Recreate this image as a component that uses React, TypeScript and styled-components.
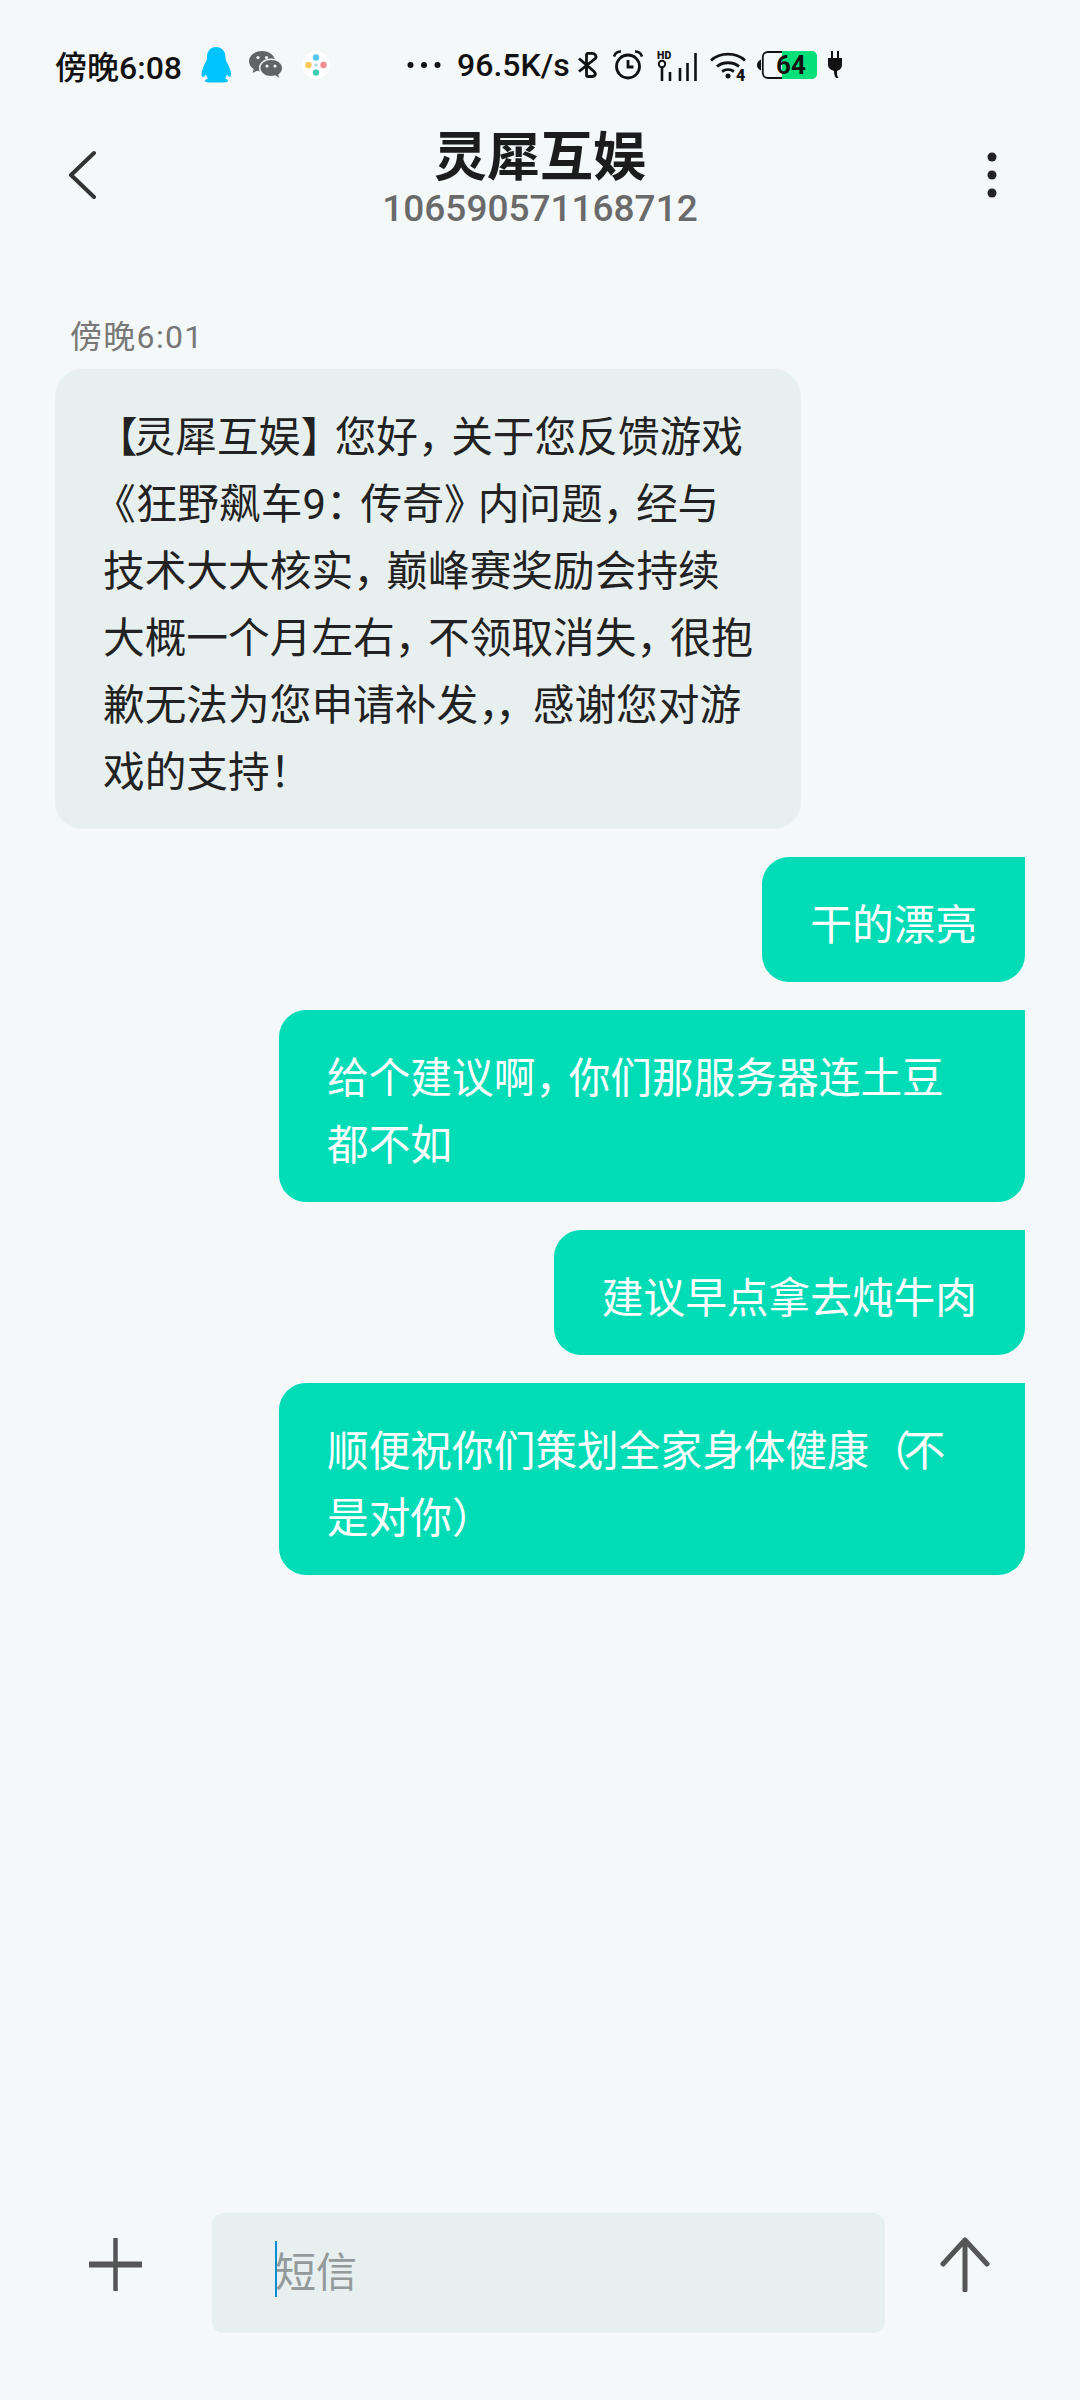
import React from "react";
import styled, { createGlobalStyle } from "styled-components";

const FONT = `"Roboto", "Noto Sans CJK SC", sans-serif`;
const PAGE_BG = "#f4f8f9";

const GlobalStyle = createGlobalStyle`
  html, body {
    margin: 0;
    padding: 0;
    background: ${PAGE_BG};
  }
`;

const Page = styled.div`
  width: 1080px;
  height: 2400px;
  display: flex;
  flex-direction: column;
  background: ${PAGE_BG};
  font-family: ${FONT};
  overflow: hidden;
`;

const StatusBar = styled.div`
  height: 126px;
  padding-top: 2px;
  flex: none;
  display: flex;
  align-items: center;
  padding-left: 55px;
  color: #111;
`;

const StatusTime = styled.span`
  font-size: 32px;
  font-weight: 500;
  width: 145px;
  flex: none;
`;

const StatusSpeed = styled.span`
  flex: none;
  font-size: 32px;
  line-height: 40px;
  font-weight: 500;
  margin: 0 8px 0 16px;
  white-space: nowrap;
`;

const StatusIcon = styled.svg<{ $gap?: number }>`
  flex: none;
  display: block;
  margin-right: ${(p) => p.$gap ?? 0}px;
`;

const Header = styled.div`
  height: 96px;
  flex: none;
  display: grid;
  grid-template-columns: 1fr auto 1fr;
  align-items: center;
  padding: 0 66px;
`;

const BackIcon = styled.svg`
  justify-self: start;
  margin-top: -8px;
`;

const MoreIcon = styled.svg`
  justify-self: end;
  margin: -8px 17px 0 0;
`;

const Contact = styled.div`
  display: flex;
  flex-direction: column;
  align-items: center;
`;

const ContactName = styled.div`
  font-size: 53px;
  line-height: 60px;
  font-weight: 700;
  color: #1c1c1c;
`;

const ContactNumber = styled.div`
  font-size: 37px;
  line-height: 42px;
  font-weight: 500;
  color: #6a6a6a;
`;

const MessageList = styled.div`
  display: flex;
  flex-direction: column;
  align-items: flex-start;
  padding: 93px 55px 0;
`;

const TimeLabel = styled.div`
  font-size: 32px;
  line-height: 40px;
  letter-spacing: 1.300px;
  margin: 0 0 12px 15px;
  color: #777;
`;

const Bubble = styled.div<{ $mine?: boolean; $wide?: boolean }>`
  box-sizing: border-box;
  width: ${(p) => (p.$wide ? "746px" : "fit-content")};
  padding: 35px 48px 23px;
  font-size: 41.700px;
  line-height: 67px;
  background: ${(p) => (p.$mine ? "#00dcb6" : "#e8f0ef")};
  color: ${(p) => (p.$mine ? "#fff" : "#222")};
  border-radius: ${(p) => (p.$mine ? "27px 0 27px 27px" : "27px")};
  align-self: ${(p) => (p.$mine ? "flex-end" : "flex-start")};
  margin-top: ${(p) => (p.$mine ? "28px" : "0")};
`;

const BubbleLine = styled.div`
  white-space: nowrap;
`;

const Punct = styled.span<{ $by: number; $hang: number }>`
  letter-spacing: ${(p) => p.$by}px;
  margin-left: ${(p) => p.$hang}px;
`;

const Composer = styled.div`
  margin-top: auto;
  margin-bottom: 67px;
  display: flex;
  align-items: center;
  padding-left: 89px;
`;

const ComposerIcon = styled.svg`
  flex: none;
  margin-top: -18px;
`;

const InputBox = styled.div`
  box-sizing: border-box;
  width: 673px;
  height: 120px;
  margin: 0 55px 0 70px;
  padding-left: 63px;
  display: flex;
  align-items: center;
  background: #e8f0ef;
  border-radius: 12px;
`;

const Caret = styled.div`
  width: 2px;
  height: 56px;
  flex: none;
  margin-top: -8px;
  background: #0a8fd6;
`;

const Placeholder = styled.span`
  font-size: 41px;
  margin: -8px 0 0 -2px;
  color: #939a9a;
`;

const PUNCT_SPACING: Record<string, number> = {
  "，": -8.5,
  "，，": -4,
  "：": -7,
  "《": 0,
  "》": -8,
  "【": -4,
  "】": -7.5,
  "（": -7,
};

// opening brackets hang into the bubble padding
const PUNCT_HANG: Record<string, number> = {
  "【": -7,
  "《": -9,
};

const renderLine = (text: string) =>
  text.split(/(，，|[，：《》【】（])/).map((part, i) =>
    part in PUNCT_SPACING ? (
      <Punct key={i} $by={PUNCT_SPACING[part]} $hang={PUNCT_HANG[part] ?? 0}>
        {part}
      </Punct>
    ) : (
      part
    )
  );

const Message: React.FC<{ lines: string[]; mine?: boolean; wide?: boolean }> = ({ lines, mine, wide }) => (
  <Bubble $mine={mine} $wide={wide}>
    {lines.map((line) => (
      <BubbleLine key={line}>{renderLine(line)}</BubbleLine>
    ))}
  </Bubble>
);

const QQIcon = () => (
  <StatusIcon width="32" height="36" viewBox="0 0 32 36" $gap={17}>
    <path
      fill="#00c4ff"
      d="M16 0c6 0 9.500 4.500 9.500 10 0 2 .3 3 1 4.500 2 3.500 4.500 8.500 4.500 13 0 1.500-.6 2.500-1.300 2.500-.8 0-1.700-1-2.700-2.500-.3 1.500-1 3-2 4 1.500.6 3 1.300 3 2.300 0 1-1.500 1.700-4 1.700h-15c-2.500 0-4-.7-4-1.700 0-1 1.500-1.700 3-2.300-1-1-1.700-2.500-2-4-1 1.500-1.900 2.500-2.700 2.500C2.100 30 1.500 29 1.500 27.500c0-4.500 2.500-9.500 4.500-13 .7-1.500 1-2.500 1-4.500C7 4.500 10 0 16 0z"
    />
  </StatusIcon>
);

const WeChatIcon = () => (
  <StatusIcon width="34" height="28" viewBox="0 0 34 28" $gap={19}>
    <path fill="#606465" d="M13 0C5.800 0 0 4.500 0 10.200c0 3.200 1.800 6 4.700 7.900L3.600 22l4.500-2.300c1.500.4 3.200.7 4.900.7 7.200 0 13-4.500 13-10.200S20.200 0 13 0z" />
    <path fill={PAGE_BG} d="M22 7.500c-6.500 0-12 4.200-12 9.400 0 5.200 5.500 9.400 12 9.400 1.500 0 3-.2 4.300-.6L31 28l-1-3.700c2.600-1.700 4-4.400 4-7.400 0-5.200-5.500-9.400-12-9.400z" />
    <path fill="#606465" d="M22 9c-5.500 0-10.500 3.500-10.500 8s5 8 10.500 8c1.500 0 2.900-.2 4.200-.7l4 2.500-1-3.300c2.300-1.500 3.800-3.800 3.800-6.500 0-4.500-5-8-10.500-8z" />
    <circle cx="9" cy="6.500" r="1.600" fill={PAGE_BG} />
    <circle cx="17.500" cy="6.500" r="1.600" fill={PAGE_BG} />
    <circle cx="18" cy="15" r="1.500" fill={PAGE_BG} />
    <circle cx="26" cy="15" r="1.500" fill={PAGE_BG} />
  </StatusIcon>
);

const FlowerIcon = () => (
  <StatusIcon width="28" height="28" viewBox="0 0 28 28" $gap={77}>
    <circle cx="14" cy="14" r="14" fill="#fff" />
    <circle cx="14" cy="6.500" r="3.200" fill="#55c7ef" />
    <circle cx="21.500" cy="14" r="3.200" fill="#f28b94" />
    <circle cx="14" cy="21.500" r="3.200" fill="#3fd0b2" />
    <circle cx="6.500" cy="14" r="3.200" fill="#f8c95b" />
    <circle cx="14" cy="14" r="1.800" fill="#b5dbe6" />
  </StatusIcon>
);

const DotsIcon = () => (
  <StatusIcon width="34" height="8" viewBox="0 0 34 8">
    <circle cx="3.500" cy="4" r="3" fill="#111" />
    <circle cx="17" cy="4" r="3" fill="#111" />
    <circle cx="30.500" cy="4" r="3" fill="#111" />
  </StatusIcon>
);

const BluetoothIcon = () => (
  <StatusIcon width="21" height="26" viewBox="0 0 21 26" $gap={14}>
    <path
      fill="none"
      stroke="#111"
      strokeWidth="2.800"
      d="M1 6.500 16 19.500c3 3 .5 5-2 5H10c-1 0-1.500-.8-1.500-1.500V3c0-1 .5-1.600 1.500-1.600h4c3 0 5 2.500 3.500 5L1 19.500"
    />
  </StatusIcon>
);

const AlarmIcon = () => (
  <StatusIcon width="30" height="30" viewBox="0 0 30 30" $gap={14}>
    <circle cx="15" cy="16.500" r="11.500" fill="none" stroke="#111" strokeWidth="2.800" />
    <path d="M15 10v7h5.500" fill="none" stroke="#111" strokeWidth="2.800" />
    <path d="M1 6.500C2 3.500 4.500 1.500 8 1.500M29 6.500C28 3.500 25.500 1.500 22 1.500" fill="none" stroke="#111" strokeWidth="2.600" />
  </StatusIcon>
);

const SignalIcon = () => (
  <StatusIcon width="40" height="31" viewBox="0 0 40 31" $gap={13}>
    <text x="0" y="9" fontFamily="Roboto" fontWeight="900" fontSize="10.500" fill="#111">HD</text>
    <circle cx="5" cy="14" r="3.200" fill="none" stroke="#111" strokeWidth="2" />
    <path d="M5 17.500V31M13 22v9M23 18v13M30.500 13v18M38.500 3v28" stroke="#111" strokeWidth="2.600" />
  </StatusIcon>
);

const WifiIcon = () => (
  <StatusIcon width="37" height="31" viewBox="0 0 37 31" $gap={10}>
    <path d="M1 10.500C10 2 26 2 35 10.500M7 16.500C13 11.500 23 11.500 29 16.500M12 21.500c3.500-2.500 8.500-2.500 12 0" fill="none" stroke="#111" strokeWidth="2.800" />
    <circle cx="18" cy="26" r="2.500" fill="#111" />
    <text x="26" y="31" fontFamily="Roboto" fontWeight="900" fontSize="16" fill="#111">4</text>
  </StatusIcon>
);

const BatteryIcon = () => (
  <StatusIcon width="60" height="28" viewBox="0 0 60 28" $gap={11}>
    <path d="M4 8.500C1.500 9.500 0 11.500 0 14s1.500 4.500 4 5.500z" fill="#111" />
    <rect x="5.800" y="1" width="53" height="26" rx="5" fill="none" stroke="#111" strokeWidth="1.800" />
    <path d="M25 0h30a5 5 0 0 1 5 5v18a5 5 0 0 1-5 5H25z" fill="#03e07a" />
    <text x="19" y="23" fontFamily="Roboto" fontWeight="700" fontSize="26" fill="#111">64</text>
  </StatusIcon>
);

const PlugIcon = () => (
  <StatusIcon width="14" height="28" viewBox="0 0 14 28">
    <path d="M3 0h2v7h4V0h2v7h3v7c0 3-2 5-5 6 0 3 0 5 1.500 7H8c-1.500-2-2-4-2-7-3-1-6-3-6-6V7h3z" fill="#111" />
  </StatusIcon>
);

const App: React.FC = () => (
  <Page>
    <GlobalStyle />
    <StatusBar>
      <StatusTime>傍晚6:08</StatusTime>
      <QQIcon />
      <WeChatIcon />
      <FlowerIcon />
      <DotsIcon />
      <StatusSpeed>96.5K/s</StatusSpeed>
      <BluetoothIcon />
      <AlarmIcon />
      <SignalIcon />
      <WifiIcon />
      <BatteryIcon />
      <PlugIcon />
    </StatusBar>

    <Header>
      <BackIcon width="30" height="50" viewBox="0 0 30 50">
        <path d="M28 3 5 25l23 22" fill="none" stroke="#333" strokeWidth="4" strokeLinecap="round" strokeLinejoin="round" />
      </BackIcon>
      <Contact>
        <ContactName>灵犀互娱</ContactName>
        <ContactNumber>106590571168712</ContactNumber>
      </Contact>
      <MoreIcon width="10" height="46" viewBox="0 0 10 46">
        <circle cx="5" cy="5" r="4.500" fill="#222" />
        <circle cx="5" cy="23" r="4.500" fill="#222" />
        <circle cx="5" cy="41" r="4.500" fill="#222" />
      </MoreIcon>
    </Header>

    <MessageList>
      <TimeLabel>傍晚6:01</TimeLabel>
      <Message
        wide
        lines={[
          "【灵犀互娱】您好，关于您反馈游戏",
          "《狂野飙车9：传奇》内问题，经与",
          "技术大大核实，巅峰赛奖励会持续",
          "大概一个月左右，不领取消失，很抱",
          "歉无法为您申请补发，，感谢您对游",
          "戏的支持！",
        ]}
      />
      <Message mine lines={["干的漂亮"]} />
      <Message mine wide lines={["给个建议啊，你们那服务器连土豆", "都不如"]} />
      <Message mine lines={["建议早点拿去炖牛肉"]} />
      <Message mine wide lines={["顺便祝你们策划全家身体健康（不", "是对你）"]} />
    </MessageList>

    <Composer>
      <ComposerIcon width="53" height="53" viewBox="0 0 53 53">
        <path d="M26.500 1v51" stroke="#555" strokeWidth="4.500" strokeLinecap="round" />
        <path d="M1 26.500h51" stroke="#555" strokeWidth="6" strokeLinecap="round" />
      </ComposerIcon>
      <InputBox>
        <Caret />
        <Placeholder>短信</Placeholder>
      </InputBox>
      <ComposerIcon width="50" height="55" viewBox="0 0 50 55">
        <path d="M25 5v48M3 27 25 3l22 24" fill="none" stroke="#555" strokeWidth="5" strokeLinecap="round" strokeLinejoin="round" />
      </ComposerIcon>
    </Composer>
  </Page>
);

export default App;
